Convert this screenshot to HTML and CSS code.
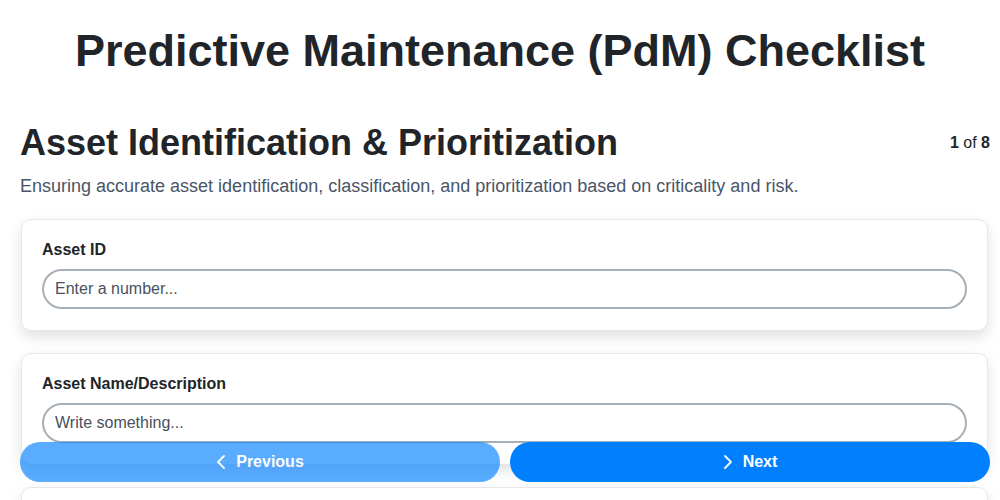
FILE: index.html
```html
<!DOCTYPE html>
<html lang="en">
<head>
  <meta charset="UTF-8">
  <meta name="viewport" content="width=device-width, initial-scale=1.0">
  <title>Predictive Maintenance (PdM) Checklist</title>
  <link rel="stylesheet" href="styles.css">
</head>
<body>
  <h1 class="page-title">Predictive Maintenance (PdM) Checklist</h1>

  <div class="container">
    <div class="section-head">
      <h2>Asset Identification &amp; Prioritization</h2>
      <div class="step"><b>1</b> of <b>8</b></div>
    </div>
    <p class="section-desc">Ensuring accurate asset identification, classification, and prioritization based on criticality and risk.</p>

    <div class="card">
      <label for="asset-id">Asset ID</label>
      <input type="number" id="asset-id" placeholder="Enter a number...">
    </div>

    <div class="card">
      <label for="asset-name">Asset Name/Description</label>
      <input type="text" id="asset-name" placeholder="Write something...">
    </div>

    <div class="card">
      <label for="asset-type">Asset Type</label>
      <input type="text" id="asset-type" placeholder="Write something...">
    </div>
  </div>

  <div class="nav-bar">
    <button class="nav-btn prev">
      <svg width="10" height="16" viewBox="0 0 10 16"><path d="M8 2L2 8l6 6" fill="none" stroke="#fff" stroke-width="1.8" stroke-linecap="round" stroke-linejoin="round"/></svg>
      Previous
    </button>
    <button class="nav-btn next">
      <svg width="10" height="16" viewBox="0 0 10 16"><path d="M2 2l6 6-6 6" fill="none" stroke="#fff" stroke-width="1.8" stroke-linecap="round" stroke-linejoin="round"/></svg>
      Next
    </button>
  </div>
</body>
</html>
```

FILE: styles.css
```css
/* Global */
body {
  margin: 0;
  font-family: 'Liberation Sans', Arial, sans-serif;
  color: #212529;
  background: #fff;
}

.page-title {
  margin: 0;
  padding-top: 24px;
  font-size: 45px;
  line-height: 53px;
  text-align: center;
}

.container {
  padding: 0 12px 0 21px;
}

/* Section header */
.section-head {
  display: flex;
  justify-content: space-between;
  align-items: center;
  margin-top: 45px;
  margin-right: -2px;
  margin-left: -1px;
}

.section-head h2 {
  margin: 0;
  font-size: 36px;
  line-height: 42px;
}

.step {
  font-size: 16px;
}

.section-desc {
  margin: 12px 0 22px -1px;
  font-size: 18px;
  line-height: 21px;
  color: #4a5568;
}

/* Cards */
.card {
  background: #fff;
  border: 1px solid #e5e7eb;
  border-radius: 10px;
  padding: 20px 20px 21px;
  margin-bottom: 22px;
  box-shadow: 0 6px 14px rgba(0, 0, 0, 0.12);
}

.card label {
  display: block;
  font-size: 16px;
  font-weight: bold;
  line-height: 19px;
  margin-bottom: 10px;
}

.card input {
  display: block;
  box-sizing: border-box;
  width: 100%;
  height: 40px;
  padding: 0 11px;
  border: 2px solid #a7afb8;
  border-radius: 20px;
  font-family: inherit;
  font-size: 16px;
  color: #212529;
  background: #fff;
  outline: none;
}

.card input::placeholder {
  color: #4a5060;
}

/* Bottom navigation */
.nav-bar {
  position: fixed;
  left: 20px;
  right: 10px;
  bottom: 18px;
  display: flex;
  gap: 10px;
}

.nav-btn {
  flex: 1;
  height: 40px;
  border: none;
  border-radius: 20px;
  background: #0080ff;
  color: #fff;
  font-family: inherit;
  font-size: 16px;
  font-weight: bold;
  display: flex;
  align-items: center;
  justify-content: center;
  gap: 10px;
  cursor: pointer;
}

.nav-btn.prev {
  opacity: 0.65;
}
```
